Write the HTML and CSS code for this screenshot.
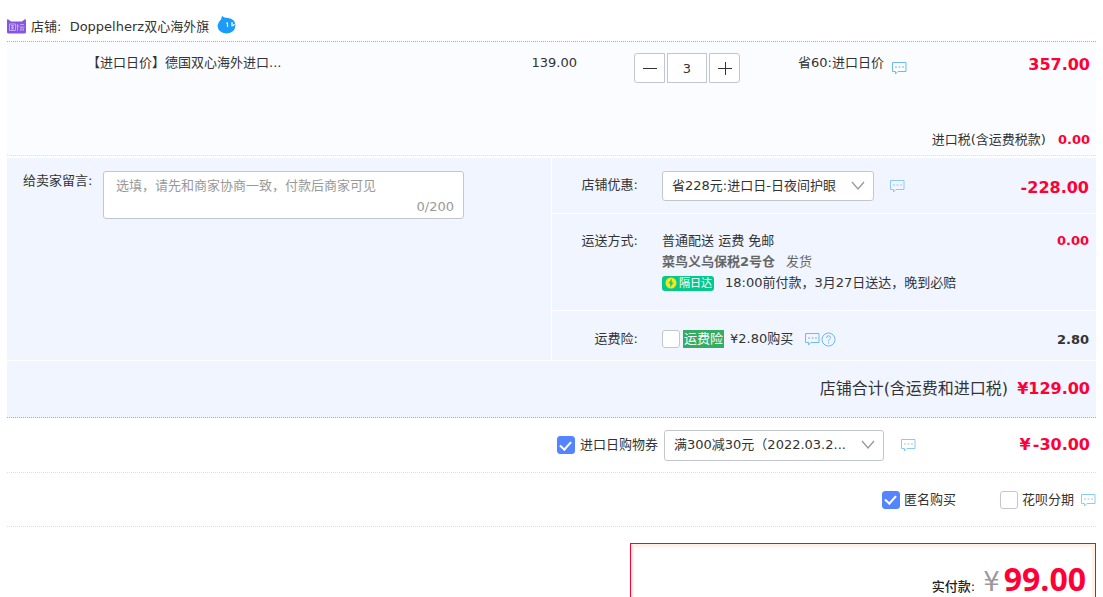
FILE: index.html
```html
<!DOCTYPE html>
<html lang="zh-CN">
<head>
<meta charset="utf-8">
<title>确认订单</title>
<link rel="stylesheet" href="styles.css">
</head>
<body>
<svg class="defs" aria-hidden="true">
  <symbol id="chat" viewBox="0 0 15 14">
    <path d="M.5 1.500h13.500v9H6l-2.500 2.500v-2.500h-3z" fill="none" stroke="currentColor"/>
    <path d="M3 6h2M6.500 6h2M10 6h2" stroke="currentColor"/>
  </symbol>
  <symbol id="down" viewBox="0 0 14 10">
    <path d="M1 1l6 7 6-7" fill="none" stroke="currentColor" stroke-width="1.300"/>
  </symbol>
</svg>
<main class="order">
  <header class="shop">
    <svg class="shop-logo" viewBox="0 0 19 15" aria-hidden="true">
      <path d="M0 1q0-1 1.500-.5L4 2.500h11L17.500.5Q19 0 19 1v12q0 1.500-1.500 1.500h-16Q0 14.500 0 13z" fill="#8656e0"/>
      <g fill="none" stroke="#d0bbf8" stroke-width=".8"><path d="M2.500 5h6v6.500h-6zM4 6.500h3M4 8.200h3M4 10h3M5.500 6.500V10M10.500 5v7M9.500 7h2.500M13 5.500h4M12.500 8h5M15 8v4M13.500 9.500v2M16.500 9.500v2"/></g>
    </svg>
    <span>店铺:&nbsp; Doppelherz双心海外旗</span>
    <svg class="wangwang" viewBox="0 0 19 18" aria-hidden="true">
      <path d="M5 0q2 2 6 2 7 1 7.500 7Q18 17 9.500 17.500 1 17 .5 9.500 1 6 4 3.500z" fill="#1b9bfa"/>
      <path d="M10.500 7v4M15 6v4M9.500 7.500l1-1M14.500 10q2 0 3-2" stroke="#fff" stroke-width="1.200" fill="none"/>
    </svg>
  </header>

  <section class="product">
    <div class="item">
      <span class="name">【进口日价】德国双心海外进口...</span>
      <span class="price">139.00</span>
      <div class="stepper">
        <button type="button" aria-label="减少"><svg viewBox="0 0 14 14"><path d="M0 7.500h14"/></svg></button>
        <input type="text" value="3" aria-label="数量">
        <button type="button" aria-label="增加"><svg viewBox="0 0 14 14"><path d="M0 7.500h14M7.500 1v13"/></svg></button>
      </div>
      <span class="promo">省60:进口日价 <svg class="chat"><use href="#chat"/></svg></span>
      <strong class="money big">357.00</strong>
    </div>
    <div class="tax"><span>进口税(含运费税款)</span><strong class="money">0.00</strong></div>
  </section>

  <section class="details">
    <div class="message">
      <label for="note">给卖家留言:</label>
      <div class="note-box">
        <textarea id="note" placeholder="选填，请先和商家协商一致，付款后商家可见"></textarea>
        <span class="count">0/200</span>
      </div>
    </div>
    <div class="options">
      <div class="option discount">
        <label class="option-label" for="discount">店铺优惠:</label>
        <div class="option-value inline">
          <span class="select discount-select"><select id="discount"><option>省228元:进口日-日夜间护眼</option></select><svg><use href="#down"/></svg></span>
          <svg class="chat"><use href="#chat"/></svg>
        </div>
        <strong class="money big">-228.00</strong>
      </div>
      <div class="option delivery">
        <span class="option-label">运送方式:</span>
        <div class="option-value">
          <div>普通配送 运费 免邮</div>
          <div class="warehouse"><b>菜鸟义乌保税2号仓</b><span>发货</span></div>
          <div class="arrival">
            <span class="badge"><svg viewBox="0 0 12 12"><circle cx="6" cy="6" r="5.500" fill="#f5e51c"/><path d="M7 1.500L3.500 6.500h2L5 10.500l3.500-5h-2z" fill="#04c98c"/></svg>隔日达</span>
            <span>18:00前付款，3月27日送达，晚到必赔</span>
          </div>
        </div>
        <strong class="money">0.00</strong>
      </div>
      <div class="option insurance">
        <span class="option-label">运费险:</span>
        <div class="option-value inline">
          <input class="check" type="checkbox" id="insurance">
          <label class="insurance-text" for="insurance"><mark>运费险</mark>¥2.80购买</label>
          <svg class="chat"><use href="#chat"/></svg>
          <svg class="help" viewBox="0 0 15 15"><circle cx="7.500" cy="7.500" r="6.500"/><path d="M5.500 6q0-2.200 2-2.200t2 1.800q0 1-1 1.700-1 .7-1 1.700M7.500 10.200v1.200"/></svg>
        </div>
        <strong class="money dark">2.80</strong>
      </div>
    </div>
  </section>

  <section class="subtotal"><span>店铺合计(含运费和进口税)</span><strong class="money big">¥129.00</strong></section>

  <section class="coupon">
    <div class="coupon-choice">
      <input class="check" type="checkbox" id="coupon" checked>
      <label for="coupon">进口日购物券</label>
      <span class="select coupon-select"><select aria-label="购物券"><option>满300减30元（2022.03.2...</option></select><svg><use href="#down"/></svg></span>
      <svg class="chat"><use href="#chat"/></svg>
    </div>
    <strong class="money big coupon-amount"><span>¥</span><span>-30.00</span></strong>
  </section>

  <section class="extras">
    <div class="inline"><input class="check" type="checkbox" id="anon" checked><label for="anon">匿名购买</label></div>
    <div class="inline"><input class="check" type="checkbox" id="installment"><label for="installment">花呗分期</label><svg class="chat"><use href="#chat"/></svg></div>
  </section>

  <section class="payment">
    <div class="payment-inner"><span class="pay-label">实付款:</span><span class="yen">¥</span><strong class="pay-total">99.00</strong></div>
  </section>
</main>
</body>
</html>
```

FILE: styles.css
```css
* { box-sizing: border-box; }
html { overflow: hidden; }
body {
  margin: 0;
  background: #fff;
  color: #333;
  font: 13px/20px "DejaVu Sans", "Noto Sans CJK SC", sans-serif;
}
button, input, select, textarea { font: inherit; color: inherit; }
.defs { position: absolute; width: 0; height: 0; }
.order { margin: 0 7px; }
.inline { display: flex; align-items: center; }
.chat { width: 15px; height: 14px; flex: none; color: #8ccaf0; }
.money { color: #ff0036; font-size: 13px; }
.money.big { font-size: 16px; }
.money.dark { color: #333; }

.shop {
  display: flex;
  align-items: center;
  height: 42px;
  padding-top: 12px;
  border-bottom: 1px dotted #80b2ff;
}
.shop-logo { width: 19px; height: 15px; margin-right: 5px; }
.wangwang { width: 19px; height: 18px; margin: 0 0 4px 8px; }

.product {
  padding: 11px 6px 5px 80px;
  background: #fbfcff;
  border-bottom: 1px dotted #ddd;
}
.item {
  display: grid;
  grid-template-columns: 1fr auto 164px 192px 100px;
  align-items: start;
  height: 77px;
}
.price { margin-right: 57px; }
.stepper { display: flex; gap: 2px; }
.stepper button, .stepper input {
  height: 30px;
  padding: 0;
  border: 1px solid #c4c6cf;
  background: #fff;
  text-align: center;
}
.stepper button { width: 31px; display: grid; place-items: center; }
.stepper button:first-child { border-radius: 3px 0 0 3px; }
.stepper button:last-child { border-radius: 0 3px 3px 0; }
.stepper input { width: 40px; }
.stepper svg { width: 14px; height: 14px; stroke: #333; stroke-width: 1; }
.promo { display: flex; gap: 8px; }
.promo .chat { margin-top: 8px; color: #6fb9ee; }
.item .money { text-align: right; padding-top: 2px; }
.tax { display: flex; justify-content: flex-end; gap: 12px; }

.details {
  display: grid;
  grid-template-columns: 1fr 1fr;
  gap: 1px;
  margin-top: 2px;
  border-bottom: 1px solid #fff;
}
.message { display: flex; padding: 13px 16px; background: #f0f5ff; }
.message label { width: 80px; flex: none; }
.note-box { position: relative; width: 361px; height: 48px; }
.note-box textarea {
  width: 100%;
  height: 100%;
  padding: 4px 12px;
  border: 1px solid #c4c6cf;
  border-radius: 3px;
  background: #fff;
  resize: none;
  overflow: hidden;
}
.note-box textarea::placeholder { color: #999; }
.count { position: absolute; right: 10px; bottom: 2px; color: #999; }

.options { display: grid; gap: 1px; }
.option { display: flex; padding-right: 7px; background: #f0f5ff; }
.option-label { width: 86px; margin-right: 24px; flex: none; text-align: right; }
.option-value { flex: 1; }
.discount { height: 55px; padding-top: 13px; align-items: flex-start; }
.discount .option-label { padding-top: 4px; }
.discount .money { padding-top: 7px; }
.discount .chat { margin-left: 16px; }
.delivery { height: 96px; padding-top: 17px; }
.warehouse { display: flex; gap: 11px; padding-top: 1px; color: #666; }
.arrival { display: flex; align-items: center; gap: 11px; padding-top: 1px; }
.badge {
  display: flex;
  align-items: center;
  gap: 2px;
  width: 52px;
  height: 15px;
  padding-left: 3px;
  border-radius: 3px;
  background: #04c98c;
  color: #fff;
  font-size: 11px;
  line-height: 15px;
}
.badge svg { width: 12px; height: 12px; }
.insurance { height: 49px; padding-top: 18px; align-items: flex-start; }
.insurance .money { padding-top: 1px; }
.insurance-text { margin: 0 12px 0 3px; }
.insurance mark { display: inline-block; margin-right: 6px; padding: 0 1px; line-height: 18px; background: #35ac63; color: #fff; }
.insurance .chat, .help { color: #6fb9ee; }
.help { width: 15px; height: 15px; margin-left: 1px; fill: none; stroke: currentColor; }

.select { position: relative; display: block; }
.select select {
  width: 100%;
  height: 100%;
  padding: 0 36px 0 9px;
  border: 1px solid #c4c6cf;
  border-radius: 3px;
  background: #fff;
  appearance: none;
}
.select svg {
  position: absolute;
  right: 9px;
  top: 10px;
  width: 14px;
  height: 10px;
  color: #999;
  pointer-events: none;
}
.discount-select { width: 212px; height: 30px; }
.discount-select select { padding-right: 28px; }
.coupon-select { width: 220px; height: 31px; }

.check {
  appearance: none;
  width: 18px;
  height: 18px;
  margin: 0;
  flex: none;
  display: grid;
  place-items: center;
  border: 1px solid #c4c6cf;
  border-radius: 3px;
  background: #fff;
}
.check:checked { border-color: #5584ff; background: #5584ff; }
.check:checked::after {
  content: "";
  width: 5px;
  height: 9px;
  margin-bottom: 2px;
  border: solid #fff;
  border-width: 0 2px 2px 0;
  transform: rotate(42deg);
}

.subtotal {
  display: flex;
  align-items: center;
  justify-content: flex-end;
  gap: 9px;
  height: 57px;
  padding-right: 6px;
  background: #f0f5ff;
  border-bottom: 1px dotted #80b2ff;
  font-size: 16px;
}

.coupon {
  display: flex;
  align-items: center;
  justify-content: flex-end;
  height: 55px;
  padding-right: 6px;
  border-bottom: 1px dotted #ddd;
}
.coupon-choice { display: flex; align-items: center; }
.coupon-choice label { margin: 0 6px 0 5px; }
.coupon-choice .chat { margin-left: 17px; }
.coupon-amount { display: flex; justify-content: flex-end; gap: 2px; width: 174px; }

.extras {
  display: flex;
  align-items: center;
  justify-content: flex-end;
  gap: 44px;
  height: 54px;
  border-bottom: 1px dotted #ddd;
}
.extras label { margin-left: 4px; }
.extras .chat { margin-left: 7px; }

.payment {
  width: 466px;
  margin: 16px 0 0 auto;
  border: 1px solid #ff0036;
}
.payment-inner {
  display: flex;
  align-items: baseline;
  justify-content: flex-end;
  padding: 12px 6px 20px;
  border: 3px solid #fff0e8;
}
.pay-label { font-weight: 500; color: #222; }
.yen { margin: 0 4px 0 8px; color: #999; font-size: 26px; line-height: 40px; }
.pay-total { color: #ff0036; font: 700 32px/40px "Open Sans", sans-serif; }
```
